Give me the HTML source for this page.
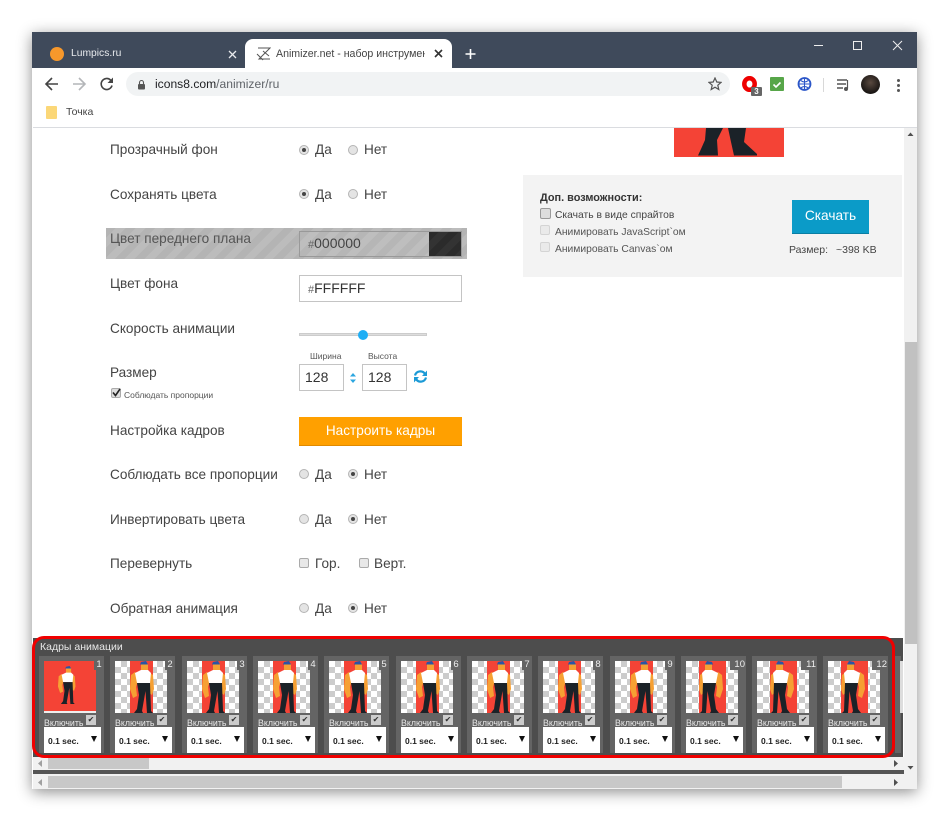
<!DOCTYPE html>
<html><head><meta charset="utf-8"><style>
*{box-sizing:border-box}
html,body{margin:0;padding:0;width:950px;height:822px;overflow:hidden;background:#fff;font-family:"Liberation Sans","Noto Sans CJK JP",sans-serif}
#all{position:absolute;left:0;top:0;width:950px;height:822px;overflow:hidden;filter:blur(.35px)}
.a{position:absolute}
#win{position:absolute;left:32px;top:32px;width:885px;height:757px;background:#fff;box-shadow:0 3px 14px rgba(0,0,0,.45)}
.t{position:absolute;white-space:nowrap;color:#444;font-size:13.6px;line-height:18px}
.r{position:absolute;width:10px;height:10px;border-radius:50%;background:#e4e4e4;border:1px solid #b4b4b4}
.r.on::after{content:"";position:absolute;left:2px;top:2px;width:4px;height:4px;border-radius:50%;background:#444}
.c{position:absolute;width:10px;height:10px;border-radius:2px;background:#e8e8e8;border:1px solid #aaa}
.in{position:absolute;background:#fff;border:1px solid #c4c4c4;color:#333;font-size:14px}
.h{font-size:11px;color:#666}
.f{position:absolute;top:656px;width:65px;height:97px;background:#646464}
.f .im{position:absolute;left:5px;top:5px;width:52px;height:52px;overflow:hidden;background-color:#fff;background-image:conic-gradient(#ccc 25%,#fff 0 50%,#ccc 0 75%,#fff 0);background-size:12px 12px}
.f .red{position:absolute;left:15px;top:0;width:23px;height:52px;background:#f44336}
.f.fl .red{left:13px;width:27px}
.f.fl .im svg{transform:scaleX(-1)}
.f svg{position:absolute}
.f .n{position:absolute;left:55px;top:5px;width:10px;height:9px;background:#646464;color:#eee;font-size:9.5px;text-align:center;line-height:7px;white-space:nowrap}
.f .n.w{left:49px;width:16px;text-align:right;padding-right:1px}
.f .v{position:absolute;left:5px;top:61px;color:#e8e8e8;font-size:8.8px;line-height:12px;white-space:nowrap}
.f .k{position:absolute;left:47px;top:59px;width:10px;height:10px;background:#ccc;color:#333;font-size:8px;line-height:10px;text-align:center}
.f .s{position:absolute;left:5px;top:71px;width:57px;height:26px;background:#fff;color:#222;font-size:8.5px;line-height:28px;padding-left:4px;font-weight:bold}
.f .s i{position:absolute;right:4px;top:9px;width:0;height:0;border:3px solid transparent;border-top:6px solid #111;border-bottom:0}
</style></head><body>
<svg width="0" height="0" style="position:absolute"><defs>
<g id="man">
<path d="M20 11L16 14L15 28L18 37L22 35L21 26L24 16ZM34 11L38 14L39 28L37 34L33 31L33 16Z" fill="#f6a033"/>
<path d="M26 3H33V10H26Z" fill="#f6a033"/>
<path d="M25 3.500L26 1L31 0L33 3.500Z" fill="#2a55a5"/>
<path d="M26 9H33L36 12L35 22H22L20 12Z" fill="#fff"/>
<path d="M22 22H35L36 50L38 52H32L30.500 30L27 50L28 52H19L22 48L24 34Z" fill="#1b2228"/>
</g>
</defs></svg>
<div id="all">
<div id="win"></div>
<div class="a" style="left:32px;top:32px;width:885px;height:36px;background:#3f4a5b"></div>
<!-- tabs -->
<div class="a" style="left:50px;top:47px;width:14px;height:14px;border-radius:50%;background:#f7982b"></div>
<div class="t" style="left:71px;top:45px;color:#e8eaed;font-size:10.300px">Lumpics.ru</div>
<svg class="a" style="left:228px;top:50px" width="9" height="9"><path d="M1 1l7 7M8 1l-7 7" stroke="#e8eaed" stroke-width="1.300"/></svg>
<div class="a" style="left:245px;top:39px;width:207px;height:29px;background:#fff;border-radius:8px 8px 0 0"></div>
<svg class="a" style="left:256px;top:47px" width="15" height="14"><path d="M2 1h12L3 12h11M1 7l6 6M7 4l6 5" stroke="#555" fill="none" stroke-width="1"/></svg>
<div class="t" style="left:276px;top:45px;color:#444;font-size:10.600px;width:149px;overflow:hidden">Animizer.net - набор инструмен</div>
<svg class="a" style="left:434px;top:49px" width="10" height="10"><path d="M1 1l7 7M8 1l-7 7" stroke="#333" stroke-width="1.600"/></svg>
<svg class="a" style="left:465px;top:48px" width="11" height="12"><path d="M5.500 1v10M.5 6h10" stroke="#fff" stroke-width="1.600"/></svg>
<!-- window controls -->
<div class="a" style="left:814px;top:45px;width:9px;height:1px;background:#eee"></div>
<div class="a" style="left:853px;top:41px;width:9px;height:9px;border:1.500px solid #eee"></div>
<svg class="a" style="left:892px;top:40px" width="11" height="11"><path d="M1 1l9 9M10 1l-9 9" stroke="#eee" stroke-width="1"/></svg>
<!-- toolbar -->
<svg class="a" style="left:44px;top:76px" width="16" height="16"><path d="M14 8H2M8 2L2 8l6 6" stroke="#444" fill="none" stroke-width="1.600"/></svg>
<svg class="a" style="left:71px;top:76px" width="16" height="16"><path d="M2 8h12M8 2l6 6-6 6" stroke="#b4b6b9" fill="none" stroke-width="1.600"/></svg>
<svg class="a" style="left:99px;top:76px" width="16" height="16"><path d="M13 9.500A5.500 5.500 0 1 1 11.500 4L13 5.500" stroke="#444" fill="none" stroke-width="1.600"/><path d="M14 1.500v5.500H8.500z" fill="#444"/></svg>
<div class="a" style="left:126px;top:72px;width:604px;height:24px;border-radius:12px;background:#f1f3f4"></div>
<svg class="a" style="left:137px;top:79px" width="9" height="11"><path d="M2.500 5V3.500a2 2 0 0 1 4 0V5" stroke="#555" fill="none" stroke-width="1.100"/><rect x="1" y="5" width="7" height="5.500" rx="1" fill="#555"/></svg>
<div class="t" style="left:155px;top:75px;font-size:12.100px;color:#202124">icons8.com<span style="color:#5f6368">/animizer/ru</span></div>
<svg class="a" style="left:708px;top:77px" width="14" height="14"><path d="M7 1l1.800 4 4.200.4-3.200 2.800 1 4.300L7 10.200 3.200 12.500l1-4.300L1 5.400 5.200 5z" stroke="#555" fill="none" stroke-width="1.200"/></svg>
<svg class="a" style="left:742px;top:76px" width="16" height="16"><ellipse cx="7.500" cy="8" rx="5.200" ry="5.800" stroke="#e00" stroke-width="4.500" fill="none"/></svg>
<div class="a" style="left:751px;top:87px;width:11px;height:9px;background:#666;color:#fff;font-size:8px;line-height:9px;text-align:center;font-weight:bold;border-radius:1px">3</div>
<div class="a" style="left:770px;top:77px;width:14px;height:14px;background:#57a649;border-radius:1px"></div>
<svg class="a" style="left:770px;top:77px" width="14" height="14"><path d="M3.500 7.500l2.500 2.500 4.500-4.500" stroke="#fff" fill="none" stroke-width="1.600"/></svg>
<svg class="a" style="left:797px;top:77px" width="15" height="15"><circle cx="7.500" cy="7" r="6" fill="#fff" stroke="#2b56c8" stroke-width="1.800"/><path d="M7.500 1v12M1.500 7h12M4 3.500c2 2 5 2 7 0M4 11c2-2 5-2 7 0" stroke="#2b56c8" fill="none"/></svg>
<div class="a" style="left:823px;top:78px;width:1px;height:14px;background:#d8d8d8"></div>
<svg class="a" style="left:836px;top:78px" width="15" height="14"><path d="M1 2h10M1 6h9M1 10h6" stroke="#555" stroke-width="1.400"/><path d="M11.500 2v8.500" stroke="#555" stroke-width="1.200"/><circle cx="10" cy="11" r="2" fill="#555"/></svg>
<div class="a" style="left:861px;top:75px;width:19px;height:19px;border-radius:50%;background:radial-gradient(circle at 50% 40%,#5a4a40,#1a1614 70%)"></div>
<div class="a" style="left:897px;top:79px;width:3px;height:3px;border-radius:50%;background:#555;box-shadow:0 5px 0 #555,0 10px 0 #555"></div>
<!-- bookmark -->
<div class="a" style="left:46px;top:106px;width:11px;height:13px;background:#fbd778;border-radius:1px"></div>
<div class="t" style="left:66px;top:103px;font-size:10.500px;color:#444">Точка</div>
<div class="a" style="left:33px;top:127px;width:884px;height:1px;background:#dadce0"></div>

<!-- preview -->
<div class="a" style="left:674px;top:128px;width:110px;height:29px;background:#f44336"></div>
<svg class="a" style="left:674px;top:128px" width="110" height="29"><path d="M32 0H49L43 12L44 27.500H24L27 21L31 12ZM54 0H72L70 14L83 26V27.500H60L57 14Z" fill="#1b2228"/></svg>
<!-- options -->
<div class="a" style="left:523px;top:175px;width:379px;height:102px;background:#f3f3f3"></div>
<div class="t" style="left:540px;top:189px;font-size:10.900px;font-weight:bold;color:#333">Доп. возможности:</div>
<div class="c" style="left:540px;top:208px;width:11px;height:11px;border-color:#999;background:#ddd"></div>
<div class="t" style="left:555px;top:207px;font-size:10.300px;color:#444">Скачать в виде спрайтов</div>
<div class="c" style="left:540px;top:225px;border-color:#d4d4d4;background:#eaeaea"></div>
<div class="t" style="left:555px;top:224px;font-size:10.300px;color:#555">Анимировать JavaScript`ом</div>
<div class="c" style="left:540px;top:242px;border-color:#d4d4d4;background:#eaeaea"></div>
<div class="t" style="left:555px;top:241px;font-size:10.300px;color:#555">Анимировать Canvas`ом</div>
<div class="a" style="left:792px;top:200px;width:77px;height:34px;background:#0b9bc8;border-bottom:1px solid #0a7ea3;color:#fff;font-size:13.700px;text-align:center;line-height:32px">Скачать</div>
<div class="t" style="left:789px;top:241px;font-size:10.500px;color:#444">Размер:</div>
<div class="t" style="left:836px;top:241px;font-size:10.500px;color:#444">~398 KB</div>

<!-- form -->
<div class="t" style="left:110px;top:141px">Прозрачный фон</div>
<div class="r on" style="left:299px;top:145px"></div><div class="t" style="left:315px;top:141px">Да</div>
<div class="r" style="left:348px;top:145px"></div><div class="t" style="left:364px;top:141px">Нет</div>
<div class="t" style="left:110px;top:186px">Сохранять цвета</div>
<div class="r on" style="left:299px;top:189px"></div><div class="t" style="left:315px;top:186px">Да</div>
<div class="r" style="left:348px;top:189px"></div><div class="t" style="left:364px;top:186px">Нет</div>

<div class="a" style="left:106px;top:228px;width:361px;height:31px;background:repeating-linear-gradient(135deg,#b4b4b4 0 7px,#bcbcbc 7px 14px)"></div>
<div class="t" style="left:110px;top:230px;color:#555">Цвет переднего плана</div>
<div class="a" style="left:299px;top:231px;width:163px;height:26px;border:1px solid #999;background:repeating-linear-gradient(135deg,#b6b6b6 0 7px,#bebebe 7px 14px);color:#444;font-size:14px;line-height:23px;padding-left:8px"><span class="h">#</span>000000</div>
<div class="a" style="left:429px;top:232px;width:32px;height:24px;background:repeating-linear-gradient(135deg,#2b2b2b 0 7px,#333 7px 14px)"></div>

<div class="t" style="left:110px;top:275px">Цвет фона</div>
<div class="in" style="left:299px;top:275px;width:163px;height:27px;line-height:24px;padding-left:8px"><span class="h">#</span>FFFFFF</div>
<div class="t" style="left:110px;top:320px">Скорость анимации</div>
<div class="a" style="left:299px;top:333px;width:128px;height:3px;background:#ddd;border:1px solid #ccc"></div>
<div class="a" style="left:358px;top:330px;width:10px;height:10px;border-radius:50%;background:#1eaef5"></div>

<div class="t" style="left:110px;top:364px">Размер</div>
<div class="c" style="left:111px;top:388px;background:#ddd;border-color:#aaa"></div>
<svg class="a" style="left:111px;top:387px" width="11" height="11"><path d="M2 5.500l2.500 3L9 2" stroke="#222" fill="none" stroke-width="1.600"/></svg>
<div class="t" style="left:124px;top:386px;font-size:8.500px;color:#555">Соблюдать пропорции</div>
<div class="t" style="left:310px;top:349px;font-size:8.500px;color:#555;line-height:14px">Ширина</div>
<div class="t" style="left:368px;top:349px;font-size:8.500px;color:#555;line-height:14px">Высота</div>
<div class="in" style="left:299px;top:364px;width:45px;height:27px;line-height:25px;padding-left:5px">128</div>
<div class="in" style="left:362px;top:364px;width:45px;height:27px;line-height:25px;padding-left:5px">128</div>
<svg class="a" style="left:349px;top:372px" width="8" height="12"><path d="M4 1L7 4.500H1zM4 11L7 7.500H1z" fill="#2ba6e0"/></svg>
<svg class="a" style="left:413px;top:369px" width="15" height="15"><path d="M2 6.500A5.500 5.500 0 0 1 12 5M13 8.500A5.500 5.500 0 0 1 3 10" stroke="#1b9ad6" fill="none" stroke-width="2.200"/><path d="M14 1.500V7H9zM1 13.500V8h5z" fill="#1b9ad6"/></svg>

<div class="t" style="left:110px;top:422px">Настройка кадров</div>
<div class="a" style="left:299px;top:417px;width:163px;height:29px;background:#ffa000;border-bottom:1px solid #e08a00;color:#fff;font-size:13.600px;text-align:center;line-height:28px">Настроить кадры</div>

<div class="t" style="left:110px;top:466px">Соблюдать все пропорции</div>
<div class="r" style="left:299px;top:469px"></div><div class="t" style="left:315px;top:466px">Да</div>
<div class="r on" style="left:348px;top:469px"></div><div class="t" style="left:364px;top:466px">Нет</div>
<div class="t" style="left:110px;top:511px">Инвертировать цвета</div>
<div class="r" style="left:299px;top:514px"></div><div class="t" style="left:315px;top:511px">Да</div>
<div class="r on" style="left:348px;top:514px"></div><div class="t" style="left:364px;top:511px">Нет</div>
<div class="t" style="left:110px;top:555px">Перевернуть</div>
<div class="c" style="left:299px;top:558px"></div><div class="t" style="left:315px;top:555px">Гор.</div>
<div class="c" style="left:359px;top:558px"></div><div class="t" style="left:374px;top:555px">Верт.</div>
<div class="t" style="left:110px;top:600px">Обратная анимация</div>
<div class="r" style="left:299px;top:603px"></div><div class="t" style="left:315px;top:600px">Да</div>
<div class="r on" style="left:348px;top:603px"></div><div class="t" style="left:364px;top:600px">Нет</div>

<!-- page scrollbar -->
<div class="a" style="left:904px;top:128px;width:13px;height:661px;background:#f1f1f1"></div>
<div class="a" style="left:905px;top:342px;width:12px;height:302px;background:#c1c1c1"></div>
<svg class="a" style="left:904px;top:130px" width="13" height="8"><path d="M3.500 6L6.500 2.500 9.500 6z" fill="#505050"/></svg>
<svg class="a" style="left:904px;top:764px" width="13" height="8"><path d="M3.500 2L6.500 5.500 9.500 2z" fill="#505050"/></svg>

<!-- frames panel -->
<div class="a" style="left:33px;top:638px;width:870px;height:119px;background:#4d4d4d"></div>
<div class="t" style="left:40px;top:640px;font-size:10.500px;color:#e8e8e8;line-height:14px">Кадры анимации</div>

<div class="f" style="left:39px"><div class="im" style="background:#f44336;height:50px"></div><div class="a" style="left:5px;top:55px;width:52px;height:2px;background:#eee"></div><svg style="left:8px;top:10px" width="38" height="38" viewBox="0 0 52 52"><use href="#man"/></svg><div class="n">1</div><div class="v">Включить</div><div class="k">✔</div><div class="s">0.1 sec.<i></i></div></div>

<div class="f" style="left:110px"><div class="im"><div class="red"></div><svg style="left:0;top:0" width="52" height="52"><use href="#man"/></svg></div><div class="n">2</div><div class="v">Включить</div><div class="k">✔</div><div class="s">0.1 sec.<i></i></div></div>
<div class="f" style="left:182px"><div class="im"><div class="red"></div><svg style="left:0;top:0" width="52" height="52"><use href="#man"/></svg></div><div class="n">3</div><div class="v">Включить</div><div class="k">✔</div><div class="s">0.1 sec.<i></i></div></div>
<div class="f" style="left:253px"><div class="im"><div class="red"></div><svg style="left:0;top:0" width="52" height="52"><use href="#man"/></svg></div><div class="n">4</div><div class="v">Включить</div><div class="k">✔</div><div class="s">0.1 sec.<i></i></div></div>
<div class="f" style="left:324px"><div class="im"><div class="red"></div><svg style="left:0;top:0" width="52" height="52"><use href="#man"/></svg></div><div class="n">5</div><div class="v">Включить</div><div class="k">✔</div><div class="s">0.1 sec.<i></i></div></div>
<div class="f" style="left:396px"><div class="im"><div class="red"></div><svg style="left:0;top:0" width="52" height="52"><use href="#man"/></svg></div><div class="n">6</div><div class="v">Включить</div><div class="k">✔</div><div class="s">0.1 sec.<i></i></div></div>
<div class="f" style="left:467px"><div class="im"><div class="red"></div><svg style="left:0;top:0" width="52" height="52"><use href="#man"/></svg></div><div class="n">7</div><div class="v">Включить</div><div class="k">✔</div><div class="s">0.1 sec.<i></i></div></div>
<div class="f" style="left:538px"><div class="im"><div class="red"></div><svg style="left:0;top:0" width="52" height="52"><use href="#man"/></svg></div><div class="n">8</div><div class="v">Включить</div><div class="k">✔</div><div class="s">0.1 sec.<i></i></div></div>
<div class="f" style="left:610px"><div class="im"><div class="red"></div><svg style="left:0;top:0" width="52" height="52"><use href="#man"/></svg></div><div class="n">9</div><div class="v">Включить</div><div class="k">✔</div><div class="s">0.1 sec.<i></i></div></div>
<div class="f fl" style="left:681px"><div class="im"><div class="red"></div><svg style="left:0;top:0" width="52" height="52"><use href="#man"/></svg></div><div class="n w">10</div><div class="v">Включить</div><div class="k">✔</div><div class="s">0.1 sec.<i></i></div></div>
<div class="f fl" style="left:752px"><div class="im"><div class="red"></div><svg style="left:0;top:0" width="52" height="52"><use href="#man"/></svg></div><div class="n w">11</div><div class="v">Включить</div><div class="k">✔</div><div class="s">0.1 sec.<i></i></div></div>
<div class="f fl" style="left:823px"><div class="im"><div class="red"></div><svg style="left:0;top:0" width="52" height="52"><use href="#man"/></svg></div><div class="n w">12</div><div class="v">Включить</div><div class="k">✔</div><div class="s">0.1 sec.<i></i></div></div>
<div class="a" style="left:895px;top:656px;width:6px;height:97px;background:#646464"></div>
<div class="a" style="left:900px;top:661px;width:3px;height:52px;background:#ddd"></div>

<!-- inner scrollbars -->
<div class="a" style="left:33px;top:757px;width:871px;height:13px;background:#f1f1f1"></div>
<div class="a" style="left:48px;top:757px;width:101px;height:12px;background:#c8c8c8"></div>
<svg class="a" style="left:36px;top:759px" width="8" height="9"><path d="M6 1L2 4.500 6 8z" fill="#a0a0a0"/></svg>
<svg class="a" style="left:892px;top:759px" width="8" height="9"><path d="M2 1L6 4.500 2 8z" fill="#505050"/></svg>
<div class="a" style="left:33px;top:770px;width:871px;height:4px;background:#555"></div>
<div class="a" style="left:33px;top:774px;width:871px;height:15px;background:#f1f1f1"></div>
<div class="a" style="left:48px;top:776px;width:794px;height:12px;background:#c8c8c8"></div>
<svg class="a" style="left:36px;top:778px" width="8" height="9"><path d="M6 1L2 4.500 6 8z" fill="#a0a0a0"/></svg>
<svg class="a" style="left:892px;top:778px" width="8" height="9"><path d="M2 1L6 4.500 2 8z" fill="#505050"/></svg>

<!-- red highlight -->
<div class="a" style="left:32px;top:636px;width:863px;height:122px;border:3px solid #f00000;border-radius:12px"></div>
</div>
</body></html>
